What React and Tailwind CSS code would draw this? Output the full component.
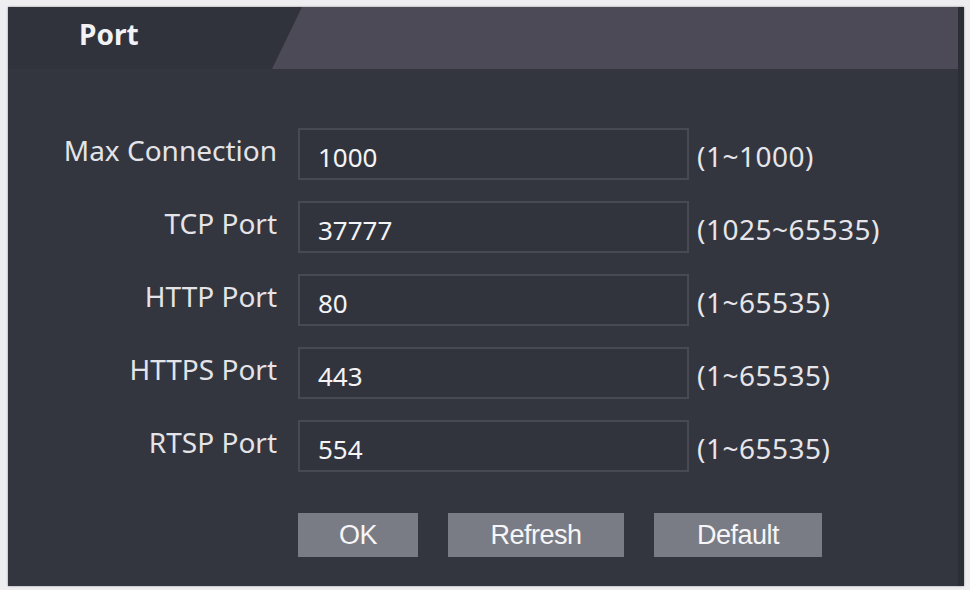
import React from 'react';

const rows = [
  { label: 'Max Connection', value: '1000', range: '(1~1000)' },
  { label: 'TCP Port', value: '37777', range: '(1025~65535)' },
  { label: 'HTTP Port', value: '80', range: '(1~65535)' },
  { label: 'HTTPS Port', value: '443', range: '(1~65535)' },
  { label: 'RTSP Port', value: '554', range: '(1~65535)' },
];

const buttons = [
  { name: 'OK', width: 'w-[120px]' },
  { name: 'Refresh', width: 'w-[176px]' },
  { name: 'Default', width: 'w-[168px]' },
];

export default function App() {
  return (
    <div className="w-[970px] h-[590px] bg-[#eeeef0] pt-[7px] pl-[8px] pr-[6px] pb-[4px] font-['Noto_Sans',sans-serif]">
      <div className="flex flex-col h-full bg-[#33353f] border-r-[6px] border-[#2c2e36] shadow-[0_0_2px_rgba(0,0,0,0.4)]">
        {/* Tab header */}
        <div className="flex h-[62px] bg-[#4c4a57]">
          <div className="w-[294px] h-full bg-[#31333c] [clip-path:polygon(0_0,100%_0,calc(100%-30px)_100%,0_100%)] flex items-center pl-[71px] pb-[8px]">
            <span className="text-[28px] font-bold text-[#f2f2f4]">Port</span>
          </div>
        </div>

        {/* Form */}
        <div className="flex flex-col gap-[21px] pt-[59px]">
          {rows.map((row) => (
            <div key={row.label} className="flex items-center">
              <div className="w-[269px] text-right text-[28px] leading-none text-[#e4e4e8] -mt-[8px]">
                {row.label}
              </div>
              <div className="ml-[21px] w-[391px] h-[52px] border-2 border-[#474953] bg-[#32343d] flex items-center pl-[18px] pt-[6px] text-[26px] leading-none text-[#f4f4f6]">
                {row.value}
              </div>
              <div className="ml-[8px] pt-[4px] text-[28px] leading-none text-[#e6e6ea] tracking-[0.5px]">{row.range}</div>
            </div>
          ))}
        </div>

        {/* Buttons */}
        <div className="flex gap-[30px] pl-[290px] mt-[41px]">
          {buttons.map((b) => (
            <button
              key={b.name}
              className={`${b.width} h-[44px] bg-[#7a7c85] text-[27px] leading-none text-[#f6f6f8] font-['Liberation_Sans',sans-serif] tracking-[-0.5px]`}
            >
              {b.name}
            </button>
          ))}
        </div>
      </div>
    </div>
  );
}
